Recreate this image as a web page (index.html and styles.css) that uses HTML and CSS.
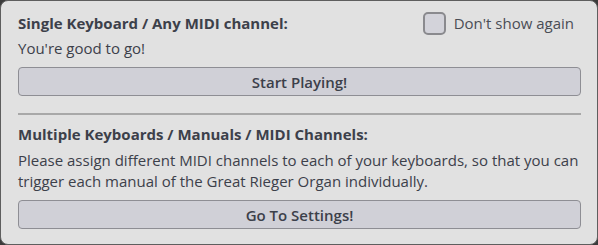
FILE: index.html
```html
<!DOCTYPE html>
<html>
<head>
<meta charset="utf-8">
<link rel="stylesheet" href="styles.css">
</head>
<body>
<div class="panel">
  <div class="header">
    <div class="title">Single Keyboard / Any MIDI channel:</div>
    <label class="check"><span class="box"></span><span class="check-label">Don't show again</span></label>
  </div>
  <p class="text first">You're good to go!</p>
  <button class="btn">Start Playing!</button>
  <hr class="sep">
  <div class="title">Multiple Keyboards / Manuals / MIDI Channels:</div>
  <p class="text para">Please assign different MIDI channels to each of your keyboards, so that you can trigger each manual of the Great Rieger Organ individually.</p>
  <button class="btn">Go To Settings!</button>
</div>
</body>
</html>
```

FILE: styles.css
```css
html, body {
  margin: 0;
  padding: 0;
  background: #3b3b3b;
}
.panel {
  box-sizing: border-box;
  width: 598px;
  height: 245px;
  background: #e1e1e1;
  border: 1px solid #5e5e5e;
  border-radius: 8px;
  padding: 10px 16px 0 17px;
  font-family: "Open Sans", sans-serif;
  color: #3c404a;
  display: flex;
  flex-direction: column;
}
.header {
  display: flex;
  justify-content: space-between;
  align-items: center;
  height: 24px;
}
.title {
  font-size: 15px;
  font-weight: 700;
  line-height: 24px;
}
.check {
  display: flex;
  align-items: center;
  gap: 8px;
  margin-right: 7px;
}
.box {
  box-sizing: border-box;
  width: 23px;
  height: 23px;
  border: 2px solid #8a8a8e;
  border-radius: 5px;
  background: #d3d3da;
}
.check-label {
  font-size: 15px;
  color: #4a4d55;
}
.text {
  margin: 0;
  font-size: 15px;
  line-height: 21px;
}
.first {
  margin-top: 3px;
}
.btn {
  box-sizing: border-box;
  width: 100%;
  height: 29px;
  margin-top: 8px;
  background: #d0d0d7;
  border: 1px solid #8e8e94;
  border-radius: 4px;
  font-family: "Open Sans", sans-serif;
  font-size: 15px;
  font-weight: 600;
  color: #3c404a;
  padding: 0;
}
.sep {
  width: 100%;
  margin: 17px 0 7px;
  border: 0;
  border-top: 2px solid #a8a8a8;
  height: 0;
}
.para {
  margin-top: 4px;
}
```
